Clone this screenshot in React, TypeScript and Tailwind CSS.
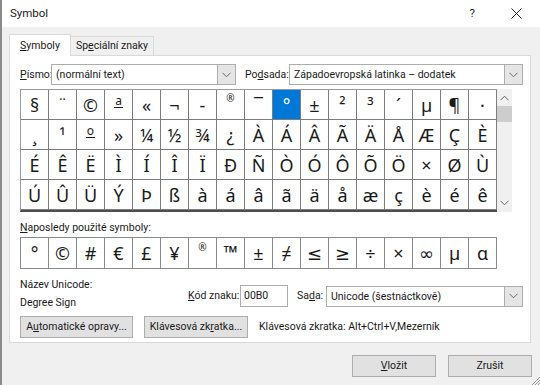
import React from "react";

const rows = [
  "§¨©ª«¬-®¯°±²³´µ¶·",
  "¸¹º»¼½¾¿ÀÁÂÃÄÅÆÇÈ",
  "ÉÊËÌÍÎÏÐÑÒÓÔÕÖ×ØÙ",
  "ÚÛÜÝÞßàáâãäåæçèéê",
];

const recent = ["°", "©", "#", "€", "£", "¥", "®", "™", "±", "≠", "≤", "≥", "÷", "×", "∞", "µ", "α"];

function Chevron() {
  return (
    <svg width="9" height="6" viewBox="0 0 9 6">
      <path d="M0.5 0.8 L4.5 4.8 L8.5 0.8" fill="none" stroke="#6b6b6b" strokeWidth="1" />
    </svg>
  );
}

function Combo({ value, className }: { value: string; className: string }) {
  return (
    <div className={`flex h-[21px] border border-[#adadad] bg-white ${className}`}>
      <div className="flex-1 truncate whitespace-nowrap pl-[4px] leading-[19px]">{value}</div>
      <div className="flex w-[18px] items-center justify-center border-l border-[#adadad] bg-[#e5e5e5]">
        <Chevron />
      </div>
    </div>
  );
}

function Glyph({ ch, selected }: { ch: string; selected?: boolean }) {
  let inner: React.ReactNode;
  if (ch === "®") {
    inner = <span className="-mt-[12px] text-[10px]">{ch}</span>;
  } else if (ch === "™") {
    inner = <span className="-mt-[2px] text-[18px] font-bold leading-none">{ch}</span>;
  } else if (ch === "ª" || ch === "º") {
    inner = (
      <span className="-mt-[6px] border-b border-[#1a1a1a] px-px text-[12px] leading-[12px]">
        {ch === "ª" ? "a" : "o"}
      </span>
    );
  } else {
    inner = <span className="text-[18px] leading-none">{ch}</span>;
  }
  return (
    <div
      className={`flex items-center justify-center font-['Noto_Sans','DejaVu_Sans',sans-serif] ${
        selected ? "bg-[#0078d7] text-white" : "bg-white text-[#1a1a1a]"
      }`}
    >
      {inner}
    </div>
  );
}

function Btn({ children, className = "" }: { children: React.ReactNode; className?: string }) {
  return (
    <div
      className={`flex h-[22px] items-center justify-center whitespace-nowrap border border-[#adadad] bg-[#e1e1e1] ${className}`}
    >
      {children}
    </div>
  );
}

export default function App() {
  return (
    <div className="relative h-[385px] w-[540px] overflow-hidden border-l-2 border-[#8a8a8a] bg-[#f0f0f0] font-['Roboto','Liberation_Sans',sans-serif] text-[10.5px] text-[#1a1a1a]">
      {/* title bar */}
      <div className="flex h-[27px] items-center bg-white pl-[8px]">
        <span className="flex-1 text-[11.5px]">Symbol</span>
        <span className="mr-[36px] text-[11.5px]">?</span>
        <svg width="11" height="11" viewBox="0 0 11 11" className="mr-[18px]">
          <path d="M0.5 0.5 L10.5 10.5 M10.5 0.5 L0.5 10.5" stroke="#222" strokeWidth="1" />
        </svg>
      </div>

      {/* tabs */}
      <div className="ml-[7px] mt-[7px] flex items-end whitespace-nowrap">
        <div className="relative z-10 -mb-px flex h-[22px] w-[62px] items-center justify-center border border-b-0 border-[#d9d9d9] bg-white">
          <span>
            <u>S</u>ymboly
          </span>
        </div>
        <div className="flex h-[19px] w-[83px] items-center justify-center border border-b-0 border-l-0 border-[#d9d9d9] bg-[#f0f0f0]">
          <span>
            Sp<u>e</u>ciální znaky
          </span>
        </div>
      </div>

      {/* panel */}
      <div className="ml-[7px] h-[288px] w-[522px] border border-[#d9d9d9] bg-white pl-[10px] pt-[8px]">
        <div className="flex items-center whitespace-nowrap">
          <span className="w-[31px]">
            <u>P</u>ísmo:
          </span>
          <Combo value="(normální text)" className="w-[185px]" />
          <span className="ml-[9px] w-[44px]">
            Po<u>d</u>sada:
          </span>
          <Combo value="Západoevropská latinka – dodatek" className="w-[234px]" />
        </div>

        <div className="mt-[4px] flex">
          <div className="grid grid-cols-[repeat(17,27px)] grid-rows-[repeat(4,29px)] gap-px border-b-2 border-l border-t border-b-[#4d4d4d] border-l-[#9a9a9a] border-t-[#9a9a9a] bg-[#7d7d7d] pr-px">
            {rows.map((r, ri) =>
              Array.from(r).map((ch, ci) => (
                <Glyph key={`${ri}-${ci}`} ch={ch} selected={ri === 0 && ci === 9} />
              ))
            )}
          </div>
          <div className="flex h-[123px] w-[15px] flex-col items-center bg-[#f0f0f0]">
            <svg width="9" height="6" viewBox="0 0 9 6" className="mt-[6px]">
              <path d="M0.5 5.2 L4.5 1.2 L8.5 5.2" fill="none" stroke="#606060" strokeWidth="1" />
            </svg>
            <div className="mt-[5px] h-[16px] w-[15px] bg-[#cdcdcd]" />
            <div className="flex-1" />
            <div className="mb-[6px]">
              <Chevron />
            </div>
          </div>
        </div>

        <div className="mt-[9px] whitespace-nowrap leading-[14px]">
          <u>N</u>aposledy použité symboly:
        </div>
        <div className="mt-[2px] grid w-fit grid-cols-[repeat(17,27px)] grid-rows-[30px] gap-px border border-[#8a8a8a] bg-[#8a8a8a]">
          {recent.map((ch, i) => (
            <Glyph key={i} ch={ch} />
          ))}
        </div>

        <div className="mt-[7px] flex whitespace-nowrap">
          <div className="w-[168px] leading-[18px]">
            <div>Název Unicode:</div>
            <div>Degree Sign</div>
          </div>
          <div className="mt-[9px] flex h-[22px] items-center">
            <span className="w-[52px]">
              <u>K</u>ód znaku:
            </span>
            <div className="h-[22px] w-[48px] border border-[#adadad] pl-[3px] leading-[20px]">00B0</div>
            <span className="ml-[9px] w-[29px]">
              Sa<u>d</u>a:
            </span>
            <Combo value="Unicode (šestnáctkově)" className="w-[197px]" />
          </div>
        </div>

        <div className="mt-[4px] flex items-center whitespace-nowrap">
          <Btn className="w-[113px]">
            <span>
              A<u>u</u>tomatické opravy...
            </span>
          </Btn>
          <Btn className="ml-[11px] w-[104px]">
            <span>
              Klávesová zk<u>r</u>atka...
            </span>
          </Btn>
          <span className="ml-[11px]">Klávesová zkratka: Alt+Ctrl+V,Mezerník</span>
        </div>
      </div>

      {/* footer buttons */}
      <div className="mt-[12px] flex justify-end pr-[8px]">
        <Btn className="w-[84px] border-[#0078d7]">
          <span>
            <u>V</u>ložit
          </span>
        </Btn>
        <Btn className="ml-[12px] w-[84px]">
          <span>Zrušit</span>
        </Btn>
      </div>

      {/* resize grip */}
      <svg width="10" height="10" viewBox="0 0 10 10" className="absolute bottom-0 right-0">
        <path d="M10 2 L2 10 M10 5 L5 10 M10 8 L8 10" stroke="#9a9a9a" strokeWidth="1" />
      </svg>
    </div>
  );
}
